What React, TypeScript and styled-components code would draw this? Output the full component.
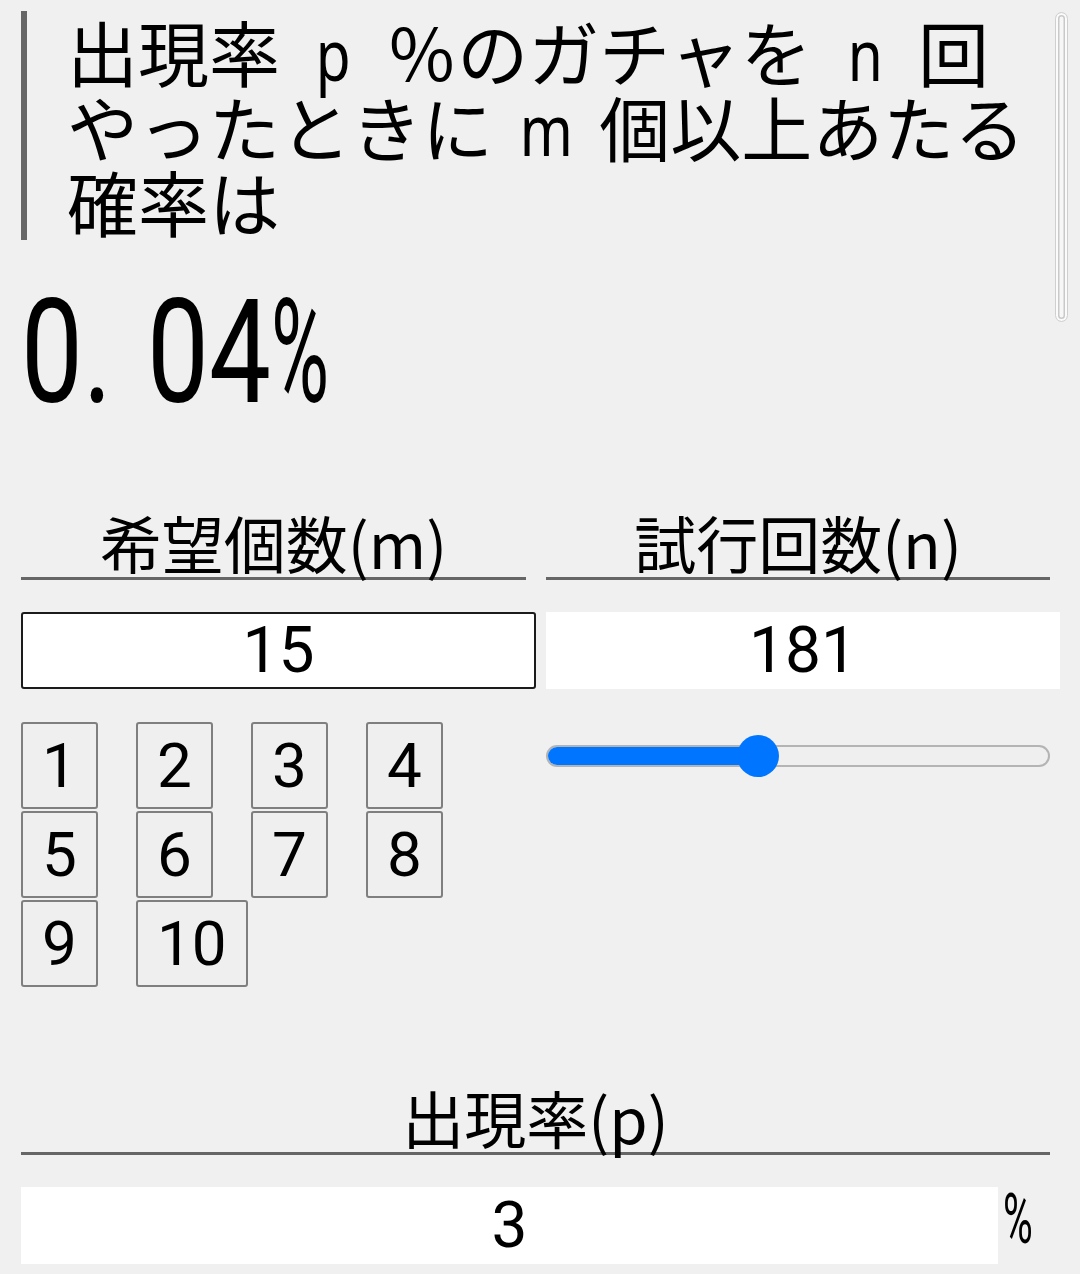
import React from "react";
import styled, { createGlobalStyle } from "styled-components";

const GlobalStyle = createGlobalStyle`
  html, body {
    margin: 0;
    padding: 0;
    background: #f0f0f0;
  }
  body {
    font-family: "Noto Sans CJK JP", "Noto Sans", sans-serif;
    color: #000;
  }
`;

const Page = styled.div`
  padding: 11px 20px 20px 21px;
  box-sizing: border-box;
  width: 1080px;
`;

const Title = styled.h1`
  margin: 0;
  border-left: 6px solid #666;
  padding: 3px 0 4px 40px;
  font-family: "Noto Sans CJK JP", sans-serif;
  font-weight: 400;
  font-size: 71px;
  line-height: 72px;
  white-space: nowrap;
`;

const Var = styled.span`
  display: inline-block;
  width: 1.05em;
  line-height: 1;
  text-align: center;
  font-family: "Noto Sans", "Roboto", sans-serif;
  transform: scaleX(0.8);
`;

const Result = styled.div`
  margin-top: 40px;
  height: 145px;
  font-family: "Roboto", sans-serif;
  font-size: 145px;
  line-height: 1;
  white-space: nowrap;
`;

const ResultInner = styled.span`
  display: inline-block;
  transform: scaleX(0.76);
  transform-origin: left center;
`;

const Dot = styled.span`
  margin-right: 46px;
`;

const Percent = styled.span`
  display: inline-block;
  transform: scaleX(0.72);
  transform-origin: left center;
`;

const Columns = styled.div`
  display: grid;
  grid-template-columns: 515px 514px;
  column-gap: 10px;
  margin-top: 86px;
`;

const Column = styled.div`
  display: flex;
  flex-direction: column;
`;

const Heading = styled.div<{ $wide?: boolean }>`
  margin-right: ${(p) => (p.$wide ? "0" : "10px")};
  height: 62px;
  padding-bottom: 4px;
  border-bottom: 3px solid #666;
  font-family: "Noto Sans CJK JP", sans-serif;
  font-size: 62px;
  line-height: 62px;
  text-align: center;
  white-space: nowrap;
`;

const NumberField = styled.div<{ $focused?: boolean }>`
  margin-top: 32px;
  height: 77px;
  box-sizing: border-box;
  background: #fff;
  border: ${(p) => (p.$focused ? "2px solid #1b1b1b" : "none")};
  border-radius: ${(p) => (p.$focused ? "3px" : "0")};
  font-family: "Roboto", sans-serif;
  font-size: 64px;
  line-height: ${(p) => (p.$focused ? "73px" : "77px")};
  text-align: center;
`;

const ButtonGrid = styled.div`
  margin-top: 33px;
  display: flex;
  flex-wrap: wrap;
  gap: 2px 38px;
  width: 470px;
`;

const NumButton = styled.button`
  box-sizing: border-box;
  height: 87px;
  min-width: 77px;
  padding: 0 19px;
  background: #efefef;
  border: 2px solid #7f7f7f;
  border-radius: 3px;
  font-family: "Roboto", sans-serif;
  font-size: 62px;
  line-height: 83px;
  color: #000;
`;

const SliderWrap = styled.div`
  position: relative;
  margin-top: 56px;
  margin-right: 10px;
  height: 22px;
`;

const Track = styled.div`
  height: 22px;
  box-sizing: border-box;
  border: 2px solid #b4b4b4;
  border-radius: 11px;
  background: #efefef;
  overflow: hidden;
`;

const Fill = styled.div`
  height: 100%;
  background: #0075ff;
  margin: -2px 0 0 -2px;
  padding: 2px 0 2px 2px;
`;

const Thumb = styled.div`
  position: absolute;
  top: 50%;
  width: 42px;
  height: 42px;
  margin: -21px 0 0 -21px;
  border-radius: 50%;
  background: #0075ff;
`;

const Section = styled.div`
  margin-top: 99px;
  margin-right: 10px;
`;

const RateRow = styled.div`
  display: flex;
  align-items: flex-start;
  margin-right: -10px;
`;

const RateField = styled(NumberField)`
  width: 977px;
  flex: none;
`;

const Unit = styled.span`
  display: inline-block;
  margin: 39px 0 0 5px;
  font-family: "Roboto", sans-serif;
  font-size: 70px;
  line-height: 50px;
  transform: scaleX(0.58);
  transform-origin: left center;
`;

const ScrollIndicator = styled.div`
  position: fixed;
  top: 12px;
  right: 12px;
  width: 13px;
  height: 310px;
  box-sizing: border-box;
  border: 1.5px solid #cfcfcf;
  border-radius: 7px;
  background: #f7f7f7;
  box-shadow: inset 0 0 0 2px #fbfbfb, inset 0 0 0 3.5px #c9c9c9;
`;

const buttons = [1, 2, 3, 4, 5, 6, 7, 8, 9, 10];
const sliderPercent = 42;

export default function App() {
  return (
    <>
      <GlobalStyle />
      <Page>
        <Title>
          出現率 <Var>p</Var> ％のガチャを <Var>n</Var> 回
          <br />
          やったときに <Var>m</Var> 個以上あたる
          <br />
          確率は
        </Title>
        <Result>
          <ResultInner>
            0<Dot>.</Dot>04<Percent>%</Percent>
          </ResultInner>
        </Result>
        <Columns>
          <Column>
            <Heading>希望個数(m)</Heading>
            <NumberField $focused>15</NumberField>
            <ButtonGrid>
              {buttons.map((b) => (
                <NumButton key={b}>{b}</NumButton>
              ))}
            </ButtonGrid>
          </Column>
          <Column>
            <Heading>試行回数(n)</Heading>
            <NumberField>181</NumberField>
            <SliderWrap>
              <Track>
                <Fill style={{ width: `${sliderPercent}%` }} />
              </Track>
              <Thumb style={{ left: `${sliderPercent}%` }} />
            </SliderWrap>
          </Column>
        </Columns>
        <Section>
          <Heading $wide>出現率(p)</Heading>
          <RateRow>
            <RateField>3</RateField>
            <Unit>%</Unit>
          </RateRow>
        </Section>
        <ScrollIndicator />
      </Page>
    </>
  );
}
